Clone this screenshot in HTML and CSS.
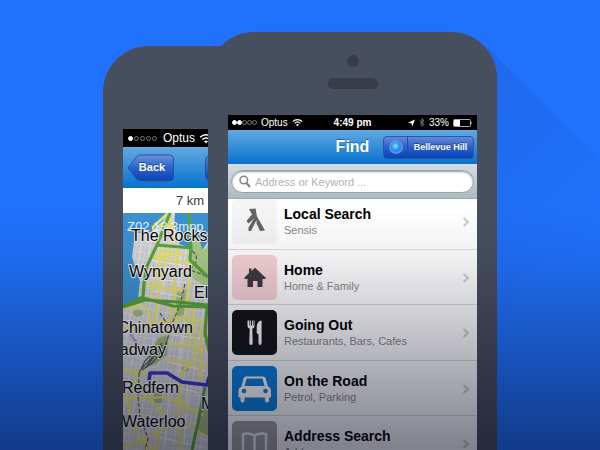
FILE: index.html
```html
<!DOCTYPE html>
<html lang="en">
<head>
<meta charset="utf-8">
<title>Find</title>
<link rel="stylesheet" href="styles.css">
</head>
<body>
<main class="stage">
  <section class="phone phone-back">
    <div class="screen">
      <div class="status status-large">
        <span class="signal"><i class="on"></i><i></i><i></i><i></i><i></i></span>
        <span>Optus</span>
        <svg class="wifi" viewBox="0 0 12 9"><path d="M1 3.400a7.200 7.200 0 0 1 10 0M2.900 5.400a4.500 4.500 0 0 1 6.200 0" fill="none" stroke="#fff" stroke-width="1.300"/><path d="M4.300 6.900a2.500 2.500 0 0 1 3.400 0L6 8.700z" fill="#fff"/></svg>
      </div>
      <div class="nav nav-large">
        <button class="back" type="button">
          <svg viewBox="0 0 48 28"><defs><linearGradient id="bk" x2="0" y2="1"><stop stop-color="#6f92dc"/><stop offset=".5" stop-color="#2b60cb"/><stop offset="1" stop-color="#0a41b5"/></linearGradient></defs><path d="M1 14 9.500 3Q11 1 14 1H42Q46.500 1 46.500 5V23Q46.500 27 42 27H14Q11 27 9.500 25Z" fill="url(#bk)" stroke="#2355a5"/></svg>
          <span>Back</span>
        </button>
        <div class="next"></div>
      </div>
      <div class="distance">7 km</div>
      <svg class="map" viewBox="0 0 85 237" width="85" height="237">
        <defs>
          <pattern id="blocks" width="9" height="7" patternUnits="userSpaceOnUse" patternTransform="rotate(9)"><rect width="9" height="7" fill="#cfd0d2"/><path d="M0 0H9M0 0V7M5 0V7" stroke="#ececec" stroke-width="1"/></pattern>
        </defs>
        <rect width="85" height="237" fill="url(#blocks)"/>
        <path d="M0 0H44L40 8 32 15 30 19 12 20 9 44 13 56 17 68 15 86 9 90 0 94Z" fill="#3d92d0"/>
        <path d="M52 0H85V28L79 38 76 30 70 24 66 34 56 31 58 22 51 18Z" fill="#3d92d0"/>
        <path d="M68 14 76 26 80 38 85 32V74L70 66 67 44Z" fill="#a9cc85"/>
        <path d="M54 78 63 76 61 102 52 104Z" fill="#a8c381"/>
        <path d="M35 125 45 122 44 142 34 150 22 155Z" fill="#9dba78"/>
        <path d="M31 180H39V190H30ZM59 155 64 152 66 157 60 160ZM77 197 85 193V222L75 220ZM1 204 7 201 10 208 2 212Z" fill="#a3bd7d"/>
        <ellipse cx="15" cy="100" rx="5" ry="3.500" fill="#a3bd7d"/>
        <g fill="none" stroke="#f6f6f6" stroke-width="1">
          <path d="M28 47 63 53M27 65 65 70M29 78 60 84M44 40 40 82M58 40 55 74M50 122 83 126M50 150 83 158M63 105 54 170M47 167 42 233M65 167 61 232M34 170 76 180M15 209 70 215M37 224 80 235"/>
        </g>
        <g fill="none" stroke="#ece566" stroke-width="2.500">
          <path d="M44 1 30 14 31 20M44 1 53 20 45 38 37 70 34 95 31 112M26 43 67 50M24 57 45 60 66 58M21 72 60 78M54 36 51 75 54 118M68 50 64 90 66 130M40 34 34 60 28 84M36 12 50 14M32 40 62 42"/>
          <path d="M4 96 16 92 26 97 27 113 13 117 2 113M30 110 60 106 84 108M48 94 47 118 39 142M70 94 73 142 59 160 55 195 57 237M0 157 18 159 28 161"/>
          <path d="M46 130 85 137M43 146 85 153M79 112 77 170M8 186 42 184 80 202M3 180 8 205 24 237M27 161 24 182 40 200 33 237M17 228 55 208 82 222M0 235 20 227 31 237M55 180 66 201M14 159 8 187"/>
        </g>
        <g fill="none" stroke="#4f5654" stroke-width="1.100" stroke-dasharray="4 2">
          <path d="M69 38Q75 42 73 49L67 57 78 61 85 64M62 71 57 92 48 113 43 132 33 144M37 100 46 114"/>
          <path d="M16 160 15 184 17 204 25 225 22 237"/>
        </g>
        <path d="M45 124 42 132 31 143 18 156M39 130 22 148 16 160M43 134 29 150 19 157M39 132 23 155" fill="none" stroke="#565b5c" stroke-width="1.200"/>
        <g fill="none" stroke="#5aa53a" stroke-width="3.200" stroke-linejoin="round">
          <path d="M47 0 34 32 24 53 21 70 20 84 0 94M34 32 69 35M66 0 68 35 67 47 85 64M0 94 22 87 55 89 85 92M20 85 50 93 85 94M84 94 82 120 86 138M82 174 76 205 69 237"/>
        </g>
        <path d="M7 120 16 134" stroke="#a99bd6" stroke-width="2.500"/>
        <path d="M26 168 27 160 44 160 59 169 84 172 86 164" fill="none" stroke="#3c34c9" stroke-width="3.600" stroke-linejoin="round"/>
        <text class="scale" x="4" y="18">Z02 13.3mpp</text>
        <g class="places">
          <text x="8" y="28">The Rocks</text>
          <text x="6" y="64">Wynyard</text>
          <text x="71" y="85">El</text>
          <text x="70" y="120" text-anchor="end">Chinatown</text>
          <text x="43" y="142" text-anchor="end">adway</text>
          <text x="-1" y="180">Redfern</text>
          <text x="78" y="196">M</text>
          <text x="-1" y="214">Waterloo</text>
        </g>
      </svg>
    </div>
  </section>

  <section class="phone phone-front">
    <div class="hardware"><span class="camera"></span><span class="speaker"></span></div>
    <div class="screen">
      <div class="status">
        <div class="side">
          <span class="signal"><i class="on"></i><i class="on"></i><i></i><i></i><i></i></span>
          <span>Optus</span>
          <svg class="wifi" viewBox="0 0 12 9"><path d="M1 3.400a7.200 7.200 0 0 1 10 0M2.900 5.400a4.500 4.500 0 0 1 6.200 0" fill="none" stroke="#fff" stroke-width="1.300"/><path d="M4.300 6.900a2.500 2.500 0 0 1 3.400 0L6 8.700z" fill="#fff"/></svg>
        </div>
        <span class="time">4:49 pm</span>
        <div class="side side-end">
          <svg width="7" height="8" viewBox="0 0 7 8"><path d="M7 .5 4.200 7.500 3.500 4.300 0 3.700z" fill="#fff"/></svg>
          <svg width="6" height="9" viewBox="0 0 6 9"><path d="M.8 2.500 5 6.300 3 8.300V.7L5 2.600.8 6.400" fill="none" stroke="#888" stroke-width=".9"/></svg>
          <span>33%</span>
          <svg width="20" height="8" viewBox="0 0 20 8"><rect x=".5" y=".5" width="17" height="7" rx="1" fill="none" stroke="#aaa"/><path d="M1 1h6v6H1zM18.500 2.500q1.500 1.500 0 3z" fill="#fff"/></svg>
        </div>
      </div>
      <div class="nav">
        <h1>Find</h1>
        <button class="place" type="button"><span class="target"><span></span></span><span class="place-name">Bellevue Hill</span></button>
      </div>
      <div class="search">
        <label class="field">
          <svg width="12" height="13" viewBox="0 0 12 13"><circle cx="4.800" cy="5" r="3.800" fill="none" stroke="#7d868d" stroke-width="1.500"/><path d="M7.500 8 11 12" stroke="#7d868d" stroke-width="2"/></svg>
          <input type="text" aria-label="Search" placeholder="Address or Keyword ...">
        </label>
      </div>
      <ul class="list">
        <li>
          <svg class="tile tile-light" viewBox="0 0 45 45"><path d="M17 10 23.500 9.500 25 17.500 33 31.500 28 32 24.500 24.500V21L19 32H16.500V28.500L22 19.500 16.500 24.500 14.500 22 20 15.500Z" fill="#636466"/></svg>
          <div class="text"><h2>Local Search</h2><p>Sensis</p></div>
          <svg class="chevron" viewBox="0 0 7 10"><path d="M1 1 5.500 5 1 9"/></svg>
        </li>
        <li>
          <svg class="tile tile-pink" viewBox="0 0 45 45"><path d="M12 23 17 18V13.500H19.500V16L23 12.800 34 23 33 24H30.500V32H25.500V26H21V32H15.500V24H13Z" fill="#3c3b40"/></svg>
          <div class="text"><h2>Home</h2><p>Home &amp; Family</p></div>
          <svg class="chevron" viewBox="0 0 7 10"><path d="M1 1 5.500 5 1 9"/></svg>
        </li>
        <li>
          <svg class="tile tile-black" viewBox="0 0 45 45"><path d="M15.500 10.500V16Q15.500 18 17.700 18.700L17.300 33Q17.300 35 19 35T20.700 33L20.300 18.700Q22.500 18 22.500 16V10.500H21.600V15.500H20.900V10.500H20V15.500H19V10.500H18.100V15.500H17.400V10.500ZM29 10.500Q25 11.500 24.700 17V23L26.500 24.500V33Q26.500 35 28 35T29.600 33V11Z" fill="#fff"/></svg>
          <div class="text"><h2>Going Out</h2><p>Restaurants, Bars, Cafes</p></div>
          <svg class="chevron" viewBox="0 0 7 10"><path d="M1 1 5.500 5 1 9"/></svg>
        </li>
        <li>
          <svg class="tile tile-blue" viewBox="0 0 45 45"><path d="M14 10.500H31Q33 10.500 33.700 12.500L36 20.500Q39 21.500 39 25V31.500H37V34.500Q37 36.500 35 36.500T33 34.500V31.500H12.500V34.500Q12.500 36.500 10.500 36.500T8.500 34.500V31.500H6.500V25Q6.500 21.500 9.500 20.500L11.500 12.500Q12 10.500 14 10.500Z" fill="#fff"/><path d="M14.500 12.500H30.500L32.500 20H12.500Z" fill="#0a80dc"/><circle cx="12" cy="25" r="2.300" fill="#0a80dc"/><circle cx="33.500" cy="25" r="2.300" fill="#0a80dc"/></svg>
          <div class="text"><h2>On the Road</h2><p>Petrol, Parking</p></div>
          <svg class="chevron" viewBox="0 0 7 10"><path d="M1 1 5.500 5 1 9"/></svg>
        </li>
        <li>
          <svg class="tile tile-grey" viewBox="0 0 45 45"><path d="M11 13Q17 11.500 22.500 14.500 28 11.500 34 13V32Q28 30.500 22.500 33 17 30.500 11 32ZM22.500 14.500V33" fill="none" stroke="#eee" stroke-width="2.500"/></svg>
          <div class="text"><h2>Address Search</h2><p>Address</p></div>
          <svg class="chevron" viewBox="0 0 7 10"><path d="M1 1 5.500 5 1 9"/></svg>
        </li>
      </ul>
    </div>
  </section>
</main>
</body>
</html>
```
FILE: styles.css
```css
* { box-sizing: border-box; }

body, h1, h2, p, ul { margin: 0; padding: 0; }

body {
  font-family: "Liberation Sans", Arial, sans-serif;
  background: #2071fb;
}

button { font: inherit; border: 0; padding: 0; }

svg { display: block; flex: none; }

.stage {
  position: relative;
  isolation: isolate;
  display: flex;
  justify-content: center;
  height: 100vh;
  overflow: hidden;
}

/* Dusk fade over the whole scene */
.stage::after {
  content: "";
  position: absolute;
  inset: 0;
  pointer-events: none;
  background: linear-gradient(rgba(5, 8, 28, 0) 46%, rgba(5, 8, 28, .06) 57%, rgba(5, 8, 28, .5) 99%);
}

.phone {
  position: relative;
  flex: none;
  width: 289px;
  padding: 0 20px;
  border-radius: 46px 46px 0 0;
  background: #474e5d;
}

.phone-back { margin-top: 46px; padding-top: 83px; }
.phone-front { margin-top: 32px; margin-left: -184px; }

/* Long diagonal shadow */
.phone-front::before {
  content: "";
  position: absolute;
  z-index: -1;
  top: 16px;
  left: calc(100% - 9px);
  width: 300px;
  height: 300px;
  background: linear-gradient(135deg, rgba(30, 60, 140, .15), rgba(30, 60, 140, 0) 50%);
  clip-path: polygon(0 0, 100% 100%, 0 100%);
}

.hardware {
  display: flex;
  flex-direction: column;
  align-items: center;
  gap: 11px;
  height: 83px;
  padding-top: 23px;
}

.camera { width: 12px; height: 12px; border-radius: 50%; background: #383c49; }
.speaker { width: 50px; height: 11px; border-radius: 6px; background: #383c49; }

.screen { overflow: hidden; }

.status {
  display: flex;
  align-items: center;
  justify-content: space-between;
  height: 15px;
  padding: 0 4px;
  background: #000;
  color: #fff;
  font-size: 10px;
}

.side { display: flex; flex: 1; align-items: center; gap: 4px; }
.side-end { justify-content: flex-end; }
.time { font-weight: bold; }

.status-large {
  justify-content: flex-start;
  gap: 4px;
  height: 18px;
  padding: 0 5px;
  font-size: 12px;
}

.signal { display: flex; gap: 1px; }
.signal i { width: 5px; height: 5px; border: 1px solid #777; border-radius: 50%; }
.signal .on { border-color: #fff; background: #fff; }
.side .signal { gap: 0; }
.status-large .signal { margin-right: 2px; }
.wifi { width: 11px; height: 9px; }
.status-large .wifi { width: 14px; height: 11px; }

.nav {
  display: grid;
  grid-template-columns: 1fr auto 1fr;
  align-items: center;
  height: 34px;
  padding: 0 3px;
  background: linear-gradient(#63a9e1, #0672cc);
}

.nav h1 {
  grid-column: 2;
  color: #fff;
  font-size: 16px;
  line-height: 20px;
  text-shadow: 0 -1px 0 rgba(0, 50, 110, .5);
}

.place {
  display: flex;
  justify-self: end;
  width: 91px;
  height: 23px;
  border: 1px solid #2459a8;
  border-radius: 4px;
  background: linear-gradient(#6589d7, #2a5fcb 50%, #0a42b8);
  color: #fff;
  font-size: 9px;
  font-weight: bold;
  line-height: 20px;
  white-space: nowrap;
}

.target {
  display: flex;
  align-items: center;
  justify-content: center;
  width: 24px;
  border-right: 1px solid #1e4da6;
}

.target span {
  width: 14px;
  height: 14px;
  border: 2px solid #5b94d6;
  border-radius: 50%;
  background: radial-gradient(circle at 45% 40%, #9fe0ff, #1d95f5 50%, #1668d4);
}

.place-name { flex: 1; text-align: center; text-shadow: 0 -1px 0 rgba(0, 30, 90, .5); }

.nav-large { display: flex; justify-content: flex-start; gap: 30px; height: 41px; padding: 0 4px; }

.back {
  display: grid;
  width: 48px;
  height: 28px;
  background: none;
  color: #fff;
  font-size: 11px;
  font-weight: bold;
  line-height: 26px;
}

.back > * { grid-area: 1 / 1; }
.back svg { width: 48px; height: 28px; }
.back span { z-index: 1; padding-left: 2px; text-shadow: 0 -1px 0 rgba(0, 30, 90, .5); }

.next {
  width: 60px;
  height: 26px;
  border: 1px solid #2355a5;
  border-radius: 5px;
  background: linear-gradient(#5b80d4, #0a41b5);
}

.distance {
  height: 25px;
  padding-left: 53px;
  background: #fff;
  color: #3c3c3c;
  font-size: 13px;
  line-height: 25px;
}

.map { overflow: hidden; }
.map .scale { fill: #e4f4ff; font-size: 13px; }

.places {
  font-size: 16px;
  fill: #000;
  stroke: #f4f4f4;
  stroke-width: 2px;
  stroke-linejoin: round;
  paint-order: stroke;
}

.search {
  height: 35px;
  padding: 6px 3px;
  border-bottom: 1px solid #9aa9b3;
  background: linear-gradient(#d5dde2, #adbac2);
}

.field {
  display: flex;
  align-items: center;
  gap: 4px;
  height: 23px;
  padding: 0 7px;
  border: 1px solid #94a1ab;
  border-radius: 12px;
  background: #fff;
  box-shadow: inset 0 1px 2px #8d99a2;
}

.field input {
  flex: 1;
  min-width: 0;
  padding: 0;
  border: 0;
  outline: 0;
  background: none;
  font: 11px "Liberation Sans", Arial, sans-serif;
}

.field input::placeholder { color: #b1b1b1; }

.list { list-style: none; background: #fff; }

.list li {
  display: flex;
  align-items: center;
  gap: 7px;
  padding: 5px 7px 5px 4px;
  border-bottom: 1px solid #d9d9d9;
}

.list li:first-child { padding-top: 0; }
.list li:nth-child(even) { padding-bottom: 4px; }

.tile { width: 45px; height: 45px; border-radius: 5px; }
.tile-light { background: #f5f5f5; }
.tile-pink { background: #f7d3d6; }
.tile-black { background: #151515; }
.tile-blue { background: #0a80dc; }
.tile-grey { background: #a0a0a0; }

.text { flex: 1; line-height: 16px; }
.text h2 { color: #000; font-size: 14px; }
.text p { color: #888; font-size: 11px; }

.chevron { width: 8px; height: 10px; fill: none; stroke: #cbcbcb; stroke-width: 2; }
```
